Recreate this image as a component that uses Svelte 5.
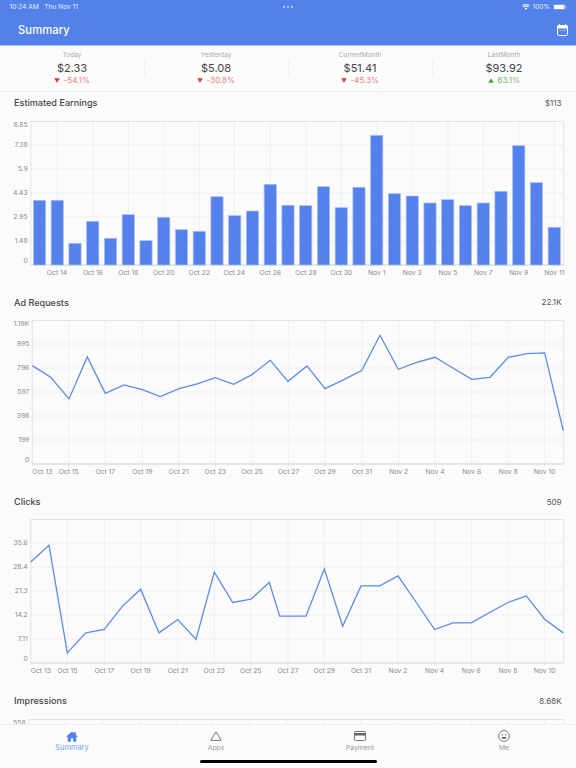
<script>
  const stats = [
    { label: 'Today', value: '$2.33', delta: '-54.1%', up: false },
    { label: 'Yesterday', value: '$5.08', delta: '-30.8%', up: false },
    { label: 'CurrentMonth', value: '$51.41', delta: '-45.3%', up: false },
    { label: 'LastMonth', value: '$93.92', delta: '63.1%', up: true }
  ];

  const TOP = 5.5;
  const BOTTOM = 149;
  const R = 563.6;
  const gridYs = [TOP, BOTTOM - 120, BOTTOM - 96, BOTTOM - 72, BOTTOM - 48, BOTTOM - 24, BOTTOM];

  function dates(start, step, n) {
    const out = [];
    let d = start;
    for (let i = 0; i < n; i++) {
      out.push(d <= 31 ? `Oct ${d}` : `Nov ${d - 31}`);
      d += step;
    }
    return out;
  }

  const barTops = [199.3, 199.3, 242.3, 220.3, 237.3, 213.7, 239.7, 216.3, 228.7, 230.3, 195.7, 214.7, 210, 183.3, 204.3, 204.7, 185.7, 206.7, 186.3, 134.3, 192.7, 195, 202, 198.7, 204.7, 202, 190.3, 144.7, 181.7, 226.3];
  const bars = barTops.map((t, i) => ({ x: 33.4 + i * 17.75, y: t - 115 }));

  const ticks1 = [57, 93, 128.3, 163.7, 199.3, 234.3, 270.3, 306, 341.3, 376.7, 412.3, 448, 483.3, 518.7, 554.3];
  const labels1 = dates(14, 2, 15);

  const ticks2 = [32.3, 68.7, 105.3, 142.3, 178.7, 215.3, 252, 288.7, 325, 362, 398.7, 435, 471.7, 508.3, 544.7];
  const labels2 = dates(13, 2, 1).concat(dates(15, 2, 14));

  const line2L = [[97,225],[152,260],[207,325],[262,199],[316,308],[372,283],[427,297],[481,318],[537,294],[592,280],[646,261],[701,281],[756,252],[811,209]];
  const line2R = [[0,272],[57,226],[111,294],[166,268],[221,240],[276,134],[331,236],[386,215],[441,200],[496,233],[551,266],[606,260],[661,200],[716,189],[770,187],[826,420]];
  const line3L = [[92,215],[147,165],[202,488],[257,428],[313,418],[368,347],[422,297],[477,428],[533,388],[588,448],[643,246],[698,337],[753,327],[808,277]];
  const line3R = [[-25,378],[54,378],[109,236],[164,408],[219,287],[275,287],[330,257],[385,337],[440,418],[495,398],[550,398],[605,367],[660,337],[715,317],[770,387],[826,428]];

  function toPts(l, r, base, svgTop) {
    const a = l.map(([x, y]) => [x / 3, base + y / 3 - svgTop]);
    const b = r.map(([x, y]) => [288 + x / 3, base + y / 3 - svgTop]);
    return a.concat(b).map((p) => p.map((v) => v.toFixed(1)).join(',')).join(' ');
  }

  const ticks3 = [30.7, 67.3, 104.3, 140.7, 177.7, 214.3, 250.7, 288, 324.3, 361, 398, 434.7, 471.3, 508, 544.7];

  const charts = [
    { title: 'Estimated Earnings', total: '$113', left: 30.8, ylabelX: 27.7, ys: ['8.85','7.38','5.9','4.43','2.95','1.48','0'], ticks: ticks1, labels: labels1, bars, first: false },
    { title: 'Ad Requests', total: '22.1K', left: 32.3, ylabelX: 29.3, ys: ['1.19K','995','796','597','398','199','0'], ticks: ticks2, labels: labels2, points: toPts(line2L, line2R, 290, 314.4), first: true },
    { title: 'Clicks', total: '509', left: 30.7, ylabelX: 27.7, ys: ['','35.6','28.4','21.3','14.2','7.11','0'], ticks: ticks3, labels: labels2, points: toPts(line3L, line3R, 490, 513.8), first: true },
    { title: 'Impressions', total: '8.68K', left: 28.7, ylabelX: 25.7, ys: ['558'], ticks: [28.7, 65.7, 102.3, 139.3, 176.3, 212.7, 249.7, 286.7, 323.7, 360.7, 397.7, 434.3, 471.7, 508.3, 544.7], labels: [], first: true }
  ];

  function yLabelPos(i) {
    if (i === 0) return TOP + 3.1;
    if (i === 6) return BOTTOM - 4.4;
    return gridYs[i] - 0.6;
  }

  const tabs = ['Summary', 'Apps', 'Payment', 'Me'];
</script>

<div class="page">
  <header class="bar">
    <div class="status">
      <span class="time">10:24 AM&nbsp;&nbsp; Thu Nov 11</span>
      <span class="dots"><i></i><i></i><i></i></span>
      <span class="sys">
        <svg width="8" height="6" viewBox="0 0 16 12" class="wifi">
          <path d="M8 11.6 5.6 8.9a3.4 3.4 0 0 1 4.8 0ZM3.9 7.1 2.2 5.2a8.3 8.3 0 0 1 11.6 0l-1.7 1.9a5.8 5.8 0 0 0-8.2 0ZM1.1 4 0 2.8a11.5 11.5 0 0 1 16 0L14.9 4A10 10 0 0 0 1.1 4Z" fill="#fff" />
        </svg>
        <span class="pct">100%</span>
        <svg width="14" height="6" viewBox="0 0 28 12" class="batt">
          <rect x="0.5" y="0.5" width="24" height="11" rx="3" fill="none" stroke="#fff" stroke-opacity="0.5" />
          <rect x="2" y="2" width="21" height="8" rx="1.6" fill="#fff" />
          <path d="M26 4v4c1-.3 1.6-1.1 1.6-2S27 4.300 26 4Z" fill="#fff" fill-opacity="0.6" />
        </svg>
      </span>
    </div>
    <div class="navrow">
      <h1>Summary</h1>
      <svg width="11" height="12" viewBox="0 0 22 24" class="cal">
        <path d="M5 1v4M17 1v4" stroke="#fff" stroke-width="2" stroke-linecap="round" />
        <rect x="1" y="3" width="20" height="20" rx="2.5" fill="none" stroke="#fff" stroke-width="2" />
        <rect x="1" y="3" width="20" height="6" fill="#fff" />
        <path d="M5 13h2.500M9.800 13h2.500M14.500 13H17" stroke="#fff" stroke-width="1.500" />
      </svg>
    </div>
  </header>

  <section class="stats">
    {#each stats as s}
      <div class="stat">
        <span class="label">{s.label}</span>
        <span class="value">{s.value}</span>
        <span class="delta" class:up={s.up}>
          <svg width="6" height="5" viewBox="0 0 6 5">
            {#if s.up}
              <path d="M3 .3 5.800 4.700H.2Z" />
            {:else}
              <path d="M3 4.700.2.300h5.600Z" />
            {/if}
          </svg>
          {s.delta}
        </span>
      </div>
    {/each}
  </section>

  {#each charts as c}
    <section class="chart">
      <div class="head">
        <h2>{c.title}</h2>
        <span class="total">{c.total}</span>
      </div>
      <svg class="plot" width="576" height="175.400" viewBox="0 0 576 175.400">
        {#each gridYs as y}
          <line x1={c.left} x2={R} y1={y} y2={y} class="grid" />
        {/each}
        {#each c.ticks as x}
          <line x1={x} x2={x} y1={TOP} y2={BOTTOM} class="grid" />
          <line x1={x} x2={x} y1={BOTTOM} y2={BOTTOM + 2.500} class="axis" />
        {/each}
        <line x1={c.left} x2={c.left} y1={TOP} y2={BOTTOM} class="axis" />
        <line x1={R} x2={R} y1={TOP} y2={BOTTOM} class="axis" />
        <line x1={c.left} x2={R} y1={BOTTOM} y2={BOTTOM} class="axis strong" />
        <line x1={c.left} x2={R} y1={TOP} y2={TOP} class="axis" />

        {#each c.ys as t, i}
          <text x={c.ylabelX} y={yLabelPos(i)} class="ylab">{t}</text>
        {/each}

        {#each c.labels as t, i}
          <text x={c.ticks[i]} y={BOTTOM + 7.700} class="xlab" class:start={c.first && i === 0}>{t}</text>
        {/each}

        {#if c.bars}
          {#each c.bars as b}
            <rect x={b.x} y={b.y} width="12.200" height={BOTTOM - b.y} class="barrect" />
          {/each}
        {/if}
        {#if c.points}
          <polyline points={c.points} class="line" />
        {/if}
      </svg>
    </section>
  {/each}

  <nav class="tabs">
    {#each tabs as t, i}
      <div class="tab" class:active={i === 0}>
        <span class="ico">
          {#if i === 0}
            <svg width="12" height="11" viewBox="0 0 24 22">
              <path d="M12 .8 0 11.600h3.400V21.500h6.300v-6.800h4.600v6.800h6.300V11.600H24L19.500 7.500V2h-3.200v2.700Z" fill="#5282ec" />
            </svg>
          {:else if i === 1}
            <svg width="12" height="10" viewBox="0 0 24 20">
              <path d="M12 1.800 22.300 18.800H1.700Z" fill="none" stroke="#666" stroke-width="1.800" stroke-linejoin="round" />
            </svg>
          {:else if i === 2}
            <svg width="12" height="10" viewBox="0 0 24 20">
              <rect x="1" y="1" width="22" height="18" rx="2" fill="none" stroke="#666" stroke-width="1.800" />
              <rect x="1" y="4" width="22" height="5" fill="#666" />
            </svg>
          {:else}
            <svg width="12" height="12" viewBox="0 0 24 24">
              <circle cx="12" cy="12" r="10.800" fill="none" stroke="#666" stroke-width="1.700" />
              <circle cx="8.300" cy="9.500" r="1.500" fill="#666" />
              <circle cx="15.700" cy="9.500" r="1.500" fill="#666" />
              <path d="M6.800 14c.8 2.500 2.800 3.800 5.200 3.800s4.400-1.300 5.200-3.800Z" fill="#666" />
            </svg>
          {/if}
        </span>
        <span class="tablabel">{t}</span>
      </div>
    {/each}
    <div class="indicator"></div>
  </nav>
</div>

<style>
  :global(body) {
    margin: 0;
    background: #fbfbfb;
  }
  .page {
    position: relative;
    width: 576px;
    height: 768px;
    overflow: hidden;
    background: #fbfbfb;
    font-family: Inter, "Liberation Sans", sans-serif;
    color: #333;
  }
  .bar {
    height: 45px;
    background: #5281ea;
    color: #fff;
    border-bottom: 1px solid #a9c1f5;
    box-sizing: content-box;
  }
  .status {
    height: 14px;
    display: grid;
    grid-template-columns: 1fr auto 1fr;
    align-items: center;
    padding: 0 9.500px;
    font-size: 6.600px;
    color: #e6edfc;
  }
  .dots {
    display: flex;
    gap: 1.500px;
  }
  .dots i {
    width: 2.200px;
    height: 2.200px;
    border-radius: 50%;
    background: #c5d5f8;
  }
  .sys {
    justify-self: end;
    display: flex;
    align-items: center;
    gap: 2.500px;
  }
  .navrow {
    height: 31px;
    padding: 0 8.500px 0 18px;
    display: flex;
    align-items: center;
    justify-content: space-between;
  }
  h1 {
    margin: 0;
    font-size: 11.200px;
    font-weight: 500;
    letter-spacing: 0.1px;
  }
  .stats {
    height: 44.500px;
    display: grid;
    grid-template-columns: repeat(4, 1fr);
    border-bottom: 1px solid #efefef;
    align-items: center;
  }
  .stat {
    display: flex;
    flex-direction: column;
    align-items: center;
    position: relative;
    height: 100%;
    justify-content: flex-start;
    padding-top: 5px;
    box-sizing: border-box;
  }
  .stat + .stat::before {
    content: "";
    position: absolute;
    left: 0;
    top: 14px;
    height: 16px;
    width: 1px;
    background: #f0f0f0;
  }
  .label {
    font-size: 6.500px;
    line-height: 8px;
    color: #aaa;
  }
  .value {
    font-size: 11px;
    line-height: 15px;
    color: #444;
    margin-top: 1.500px;
  }
  .delta {
    font-size: 8px;
    line-height: 9px;
    color: #f47d7d;
    display: flex;
    align-items: center;
    gap: 3.500px;
  }
  .delta svg {
    fill: #ee2f2f;
  }
  .delta.up {
    color: #6cc06f;
  }
  .delta.up svg {
    fill: #3fa344;
  }
  .chart {
    height: 199.400px;
  }
  .head {
    height: 24px;
    padding: 0 14.500px 1.500px 14px;
    box-sizing: border-box;
    display: flex;
    align-items: center;
    justify-content: space-between;
  }
  h2 {
    margin: 0;
    font-size: 9.100px;
    font-weight: 500;
    color: #444;
  }
  .total {
    font-size: 8px;
    color: #555;
  }
  .plot {
    display: block;
  }
  .grid {
    stroke: #efefef;
    stroke-width: 1;
  }
  .axis {
    stroke: #e2e2e2;
    stroke-width: 0.800;
  }
  .axis.strong {
    stroke: #d8d8d8;
    stroke-width: 1;
  }
  .ylab {
    font-size: 6.800px;
    fill: #8a8a8a;
    text-anchor: end;
    dominant-baseline: central;
  }
  .xlab {
    font-size: 6.800px;
    fill: #8a8a8a;
    text-anchor: middle;
    dominant-baseline: central;
  }
  .xlab.start {
    text-anchor: start;
  }
  .barrect {
    fill: #5581ec;
    stroke: #a8bff5;
    stroke-width: 0.700;
  }
  .line {
    fill: none;
    stroke: #5b8bf0;
    stroke-width: 1.300;
    stroke-linejoin: miter;
  }
  .tabs {
    position: absolute;
    left: 0;
    right: 0;
    bottom: 0;
    height: 43.500px;
    background: #fbfbfb;
    border-top: 1px solid #efefef;
    display: grid;
    grid-template-columns: repeat(4, 1fr);
    box-sizing: content-box;
  }
  .tab {
    display: flex;
    flex-direction: column;
    align-items: center;
    padding-top: 5.500px;
    color: #999;
  }
  .ico {
    height: 12.500px;
    display: flex;
    align-items: center;
    justify-content: center;
  }
  .tablabel {
    font-size: 6.800px;
    line-height: 8px;
    margin-top: 1.500px;
  }
  .tab.active .tablabel {
    color: #7a9ff0;
    font-size: 7.400px;
  }
  .indicator {
    position: absolute;
    left: 200px;
    width: 177px;
    bottom: 4.800px;
    height: 3px;
    border-radius: 2px;
    background: #000;
  }
</style>
